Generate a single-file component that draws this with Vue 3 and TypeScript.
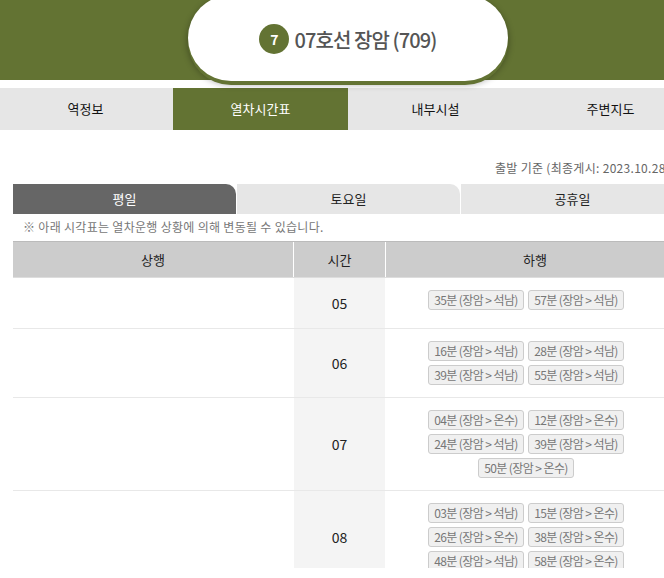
<script setup lang="ts">
interface Row {
  hour: string;
  trains: string[];
}

const navItems = ['역정보', '열차시간표', '내부시설', '주변지도'];
const dayTabs = ['평일', '토요일', '공휴일'];

const rows: Row[] = [
  { hour: '05', trains: ['35분 (장암 > 석남)', '57분 (장암 > 석남)'] },
  { hour: '06', trains: ['16분 (장암 > 석남)', '28분 (장암 > 석남)', '39분 (장암 > 석남)', '55분 (장암 > 석남)'] },
  {
    hour: '07',
    trains: ['04분 (장암 > 온수)', '12분 (장암 > 온수)', '24분 (장암 > 석남)', '39분 (장암 > 석남)', '50분 (장암 > 온수)'],
  },
  {
    hour: '08',
    trains: ['03분 (장암 > 석남)', '15분 (장암 > 온수)', '26분 (장암 > 온수)', '38분 (장암 > 온수)', '48분 (장암 > 석남)', '58분 (장암 > 온수)'],
  },
];
</script>

<template>
  <div class="page">
    <header class="head">
      <div class="pill">
        <span class="line-no">7</span>
        <h1 class="title">07호선 장암 (709)</h1>
      </div>
    </header>

    <nav class="nav">
      <a v-for="item in navItems" :key="item" class="nav-item" :class="{ on: item === '열차시간표' }">{{ item }}</a>
    </nav>

    <main class="content">
      <p class="date">출발 기준 (최종게시: 2023.10.28)</p>

      <div class="day-tabs">
        <a v-for="(tab, i) in dayTabs" :key="tab" class="day-tab" :class="{ on: i === 0 }">{{ tab }}</a>
      </div>

      <p class="note">※ 아래 시각표는 열차운행 상황에 의해 변동될 수 있습니다.</p>

      <div class="table">
        <div class="thead">
          <div class="th up">상행</div>
          <div class="th hour">시간</div>
          <div class="th down">하행</div>
        </div>
        <div v-for="row in rows" :key="row.hour" class="tr">
          <div class="td up"></div>
          <div class="td hour">{{ row.hour }}</div>
          <div class="td down">
            <span v-for="t in row.trains" :key="t" class="train">{{ t }}</span>
          </div>
        </div>
      </div>
    </main>
  </div>
</template>

<style>
html,
body {
  margin: 0;
  background: #fff;
  overflow: hidden;
}
</style>

<style scoped>
.page {
  width: 664px;
  height: 568px;
  overflow: hidden;
  font-family: "Noto Sans CJK KR", "Noto Sans", sans-serif;
  background: #fff;
}

.head {
  width: 696px;
  height: 80px;
  background: #637333;
  display: flex;
  justify-content: center;
}

.pill {
  flex: none;
  box-sizing: border-box;
  width: 320px;
  height: 86px;
  margin-top: -5px;
  padding-top: 2px;
  border-radius: 43px;
  background: #fff;
  box-shadow: 0 4px 0 #637333, 0 3px 6px 1px rgba(0, 0, 0, 0.3);
  display: flex;
  align-items: center;
  justify-content: center;
  gap: 5px;
  position: relative;
}

.line-no {
  width: 30px;
  height: 30px;
  border-radius: 50%;
  background: #637333;
  color: #fff;
  font-size: 14px;
  font-weight: 700;
  line-height: 30px;
  text-align: center;
}

.title {
  margin: 0;
  font-size: 20px;
  font-weight: 500;
  letter-spacing: -0.9px;
  color: #555;
}

.nav {
  width: 700px;
  margin: 8px 0 0 -2px;
  display: flex;
  background: #e6e6e6;
}

.nav-item {
  width: 175px;
  height: 42px;
  line-height: 42px;
  text-align: center;
  font-size: 13px;
  color: #111;
}

.nav-item.on {
  background: #637333;
  color: #fff;
}

.content {
  width: 671px;
  margin-left: 13px;
}

.date {
  margin: 28px 0 0;
  padding-right: 14px;
  height: 20px;
  line-height: 20px;
  font-size: 12px;
  letter-spacing: 0.3px;
  color: #666;
  text-align: right;
  white-space: nowrap;
}

.day-tabs {
  margin-top: 6px;
  display: flex;
  gap: 1px;
}

.day-tab {
  flex: 1;
  height: 30px;
  line-height: 30px;
  text-align: center;
  font-size: 13px;
  color: #222;
  background: #e6e6e6;
  border-top-right-radius: 10px;
}

.day-tab.on {
  background: #666;
  color: #fff;
}

.note {
  margin: 0;
  height: 27px;
  line-height: 26px;
  padding-left: 10px;
  font-size: 12px;
  letter-spacing: 0.3px;
  color: #777;
  white-space: nowrap;
}

.thead,
.tr {
  display: grid;
  grid-template-columns: 280px 92px 1fr;
}

.thead {
  border-top: 1px solid #bbb;
  border-bottom: 1px solid #ddd;
}

.th {
  height: 35px;
  line-height: 35px;
  text-align: center;
  font-size: 13px;
  color: #222;
  background: #ccc;
  border-left: 1px solid #fff;
}

.th.up {
  border-left: 0;
}

.tr {
  min-height: 50px;
  border-bottom: 1px solid #e8e8e8;
}

.td.hour {
  display: flex;
  align-items: center;
  justify-content: center;
  background: #f4f4f4;
  margin-left: 1px;
  font-size: 14px;
  color: #222;
}

.td.down {
  margin-left: 1px;
  padding: 12px 60px 12px 42px;
  display: flex;
  flex-wrap: wrap;
  justify-content: center;
  align-content: flex-start;
  gap: 4px;
}

.train {
  box-sizing: border-box;
  width: 96px;
  height: 20px;
  line-height: 18px;
  text-align: center;
  font-size: 12px;
  letter-spacing: -0.6px;
  color: #777;
  background: #f0f0f0;
  border: 1px solid #ccc;
  border-radius: 3px;
  white-space: nowrap;
}
</style>
